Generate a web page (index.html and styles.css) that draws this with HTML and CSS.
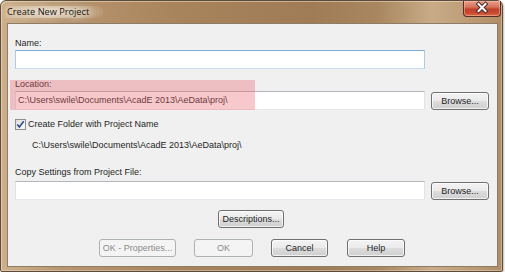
FILE: index.html
```html
<!DOCTYPE html>
<html>
<head>
<meta charset="utf-8">
<link rel="stylesheet" href="styles.css">
</head>
<body>
<div class="window">
  <div class="titlebar">
    <span class="title">Create New Project</span>
    <div class="close">
      <svg width="38" height="16" viewBox="0 0 38 16">
        <path d="M15.5 4 L22.5 11 M22.5 4 L15.5 11" stroke="#4a2a22" stroke-width="4" stroke-linecap="square" fill="none"/>
        <path d="M15.5 4 L22.5 11 M22.5 4 L15.5 11" stroke="#ffffff" stroke-width="2" stroke-linecap="square" fill="none"/>
      </svg>
    </div>
  </div>
  <div class="client">
    <div class="label first">Name:</div>
    <div class="field-row"><div class="input focus"></div></div>
    <div class="label loc">Location:</div>
    <div class="field-row"><div class="input">C:\Users\swile\Documents\AcadE 2013\AeData\proj\</div><div class="btn browse">Browse...</div></div>
    <div class="check-row">
      <span class="checkbox">
        <svg width="11" height="11" viewBox="0 0 11 11"><path d="M2.3 5.4 L4.4 8 L8.7 2.2" stroke="#2f4a8a" stroke-width="1.6" fill="none"/></svg>
      </span>
      <span>Create Folder with Project Name</span>
    </div>
    <div class="path">C:\Users\swile\Documents\AcadE 2013\AeData\proj\</div>
    <div class="label copy">Copy Settings from Project File:</div>
    <div class="field-row"><div class="input"></div><div class="btn browse">Browse...</div></div>
    <div class="center-row"><div class="btn desc">Descriptions...</div></div>
    <div class="button-row">
      <div class="btn disabled props">OK - Properties...</div>
      <div class="btn disabled ok">OK</div>
      <div class="btn cancel">Cancel</div>
      <div class="btn help">Help</div>
    </div>
    <div class="highlight"></div>
  </div>
</div>
</body>
</html>
```

FILE: styles.css
```css
html, body {
  margin: 0;
  padding: 0;
  background: #ffffff;
}
body {
  font-family: "Liberation Sans", Arial, sans-serif;
  font-size: 9px;
  color: #1e1e1e;
}
.window {
  width: 503px;
  height: 272px;
  box-sizing: border-box;
  border: 1px solid #5e4c3a;
  border-radius: 6px 6px 2px 2px;
  padding: 0 4px 4px 6px;
  display: flex;
  flex-direction: column;
  background: linear-gradient(90deg, #cdb08c 0%, #b99670 12%, #a8845c 35%, #9f7c56 62%, #a8865f 75%, #c8ab88 86%, #bf9f7a 92%, #b08d66 100%);
  box-shadow: inset 1px 1px 0 rgba(255,240,220,0.45), inset -1px -1px 0 rgba(255,240,220,0.35), 1px 1px 2px rgba(0,0,0,0.25);
}
.titlebar {
  height: 22px;
  display: flex;
  align-items: flex-start;
  flex-shrink: 0;
}
.title {
  font-family: "Open Sans", "Noto Sans", sans-serif;
  font-size: 9.2px;
  line-height: 12px;
  margin-top: 5px;
  margin-left: -1px;
  padding: 0 14px 0 1px;
  color: #111;
  text-shadow: 0 0 6px #f4ebdf, 0 0 10px #f4ebdf, 0 0 14px #efe3d2;
  background: radial-gradient(ellipse 62% 100% at 45% 50%, rgba(236,224,206,0.95), rgba(236,224,206,0) 100%);
}
.close {
  margin-left: auto;
  margin-right: -3px;
  width: 38px;
  height: 16px;
  box-sizing: border-box;
  border: 1px solid #5b2c22;
  border-top: none;
  border-radius: 0 0 4px 4px;
  background: linear-gradient(#e9a08e 0%, #d6735d 40%, #c0402b 55%, #c94a32 80%, #dc6b4a 100%);
  box-shadow: inset 0 0 0 1px rgba(255,200,180,0.45);
}
.close svg { display: block; margin: -1px 0 0 -1px; }
.client {
  position: relative;
  flex: 1;
  background: #f0f0f0;
  border: 1px solid #8f7c66;
  padding: 14px 0 0 7px;
  display: flex;
  flex-direction: column;
}
.label {
  line-height: 10px;
  height: 10px;
}
.label.first { margin-bottom: 2px; }
.label.loc { margin-top: 10px; margin-bottom: 2px; }
.label.copy { margin-top: 17px; margin-bottom: 4px; }
.field-row {
  display: flex;
  align-items: center;
  gap: 6px;
  height: 19px;
}
.input {
  width: 410px;
  height: 19px;
  box-sizing: border-box;
  background: #fff;
  border: 1px solid;
  border-color: #b3b6bc #dfe3e9 #e6eaef #dfe3e9;
  padding-left: 2px;
  line-height: 17px;
  white-space: nowrap;
}
.input.focus {
  border-color: #7ea9d8 #afcbe8 #c6dbef #afcbe8;
}
.btn {
  height: 18px;
  box-sizing: border-box;
  border: 1px solid #707070;
  border-radius: 3px;
  background: linear-gradient(#f3f3f3 0%, #ebebeb 48%, #dcdcdc 52%, #cfcfcf 100%);
  box-shadow: inset 0 0 0 1px rgba(255,255,255,0.7);
  text-align: center;
  line-height: 16px;
  white-space: nowrap;
}
.btn.browse { width: 58px; }
.btn.disabled {
  border-color: #adb2b5;
  background: #f4f4f4;
  color: #8a8a8a;
  box-shadow: none;
}
.check-row {
  margin-top: 8px;
  height: 12px;
  display: flex;
  align-items: center;
  gap: 2px;
  line-height: 12px;
}
.checkbox {
  width: 11px;
  height: 11px;
  box-sizing: border-box;
  border: 1px solid #8e8f8f;
  background: linear-gradient(135deg, #dcdcdc, #fbfbfb);
  display: flex;
  align-items: center;
  justify-content: center;
}
.checkbox svg { display: block; margin: -1px; }
.path {
  margin-top: 10px;
  padding-left: 17px;
  line-height: 10px;
  height: 10px;
}
.center-row {
  margin-top: 10px;
  display: flex;
  padding-left: 203px;
}
.btn.desc { width: 66px; }
.button-row {
  margin-top: 11px;
  display: flex;
  padding-left: 84px;
  gap: 18px;
}
.btn.props { width: 77px; }
.btn.ok { width: 59px; }
.btn.cancel { width: 57px; }
.btn.help { width: 58px; margin-left: 1px; }
.highlight {
  position: absolute;
  left: 2px;
  top: 56px;
  width: 245px;
  height: 30px;
  background: rgba(235, 100, 110, 0.35);
  pointer-events: none;
}
```
